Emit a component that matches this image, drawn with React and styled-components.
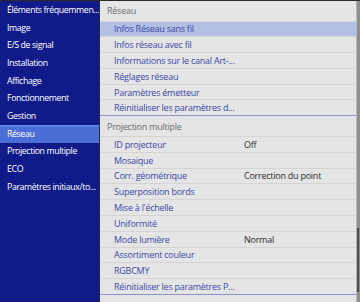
import React from 'react';
import styled, { createGlobalStyle } from 'styled-components';

const GlobalStyle = createGlobalStyle`
    html, body {
        margin: 0;
        padding: 0;
        background: #2a2a2a;
    }
    * {
        box-sizing: border-box;
    }
`;

const Screen = styled.div`
    width: 360px;
    height: 302px;
    padding-top: 1px;
    display: flex;
    font-family: "Open Sans", "Noto Sans", sans-serif;
    font-size: 9px;
    letter-spacing: -0.25px;
    overflow: hidden;
`;

const SideMenu = styled.div`
    width: 99px;
    height: 100%;
    margin-right: 1px;
    background: #101b89;
    display: flex;
    flex-direction: column;
    overflow: hidden;
`;

const SideItem = styled.div`
    height: 17.7px;
    padding-left: 7px;
    display: flex;
    align-items: center;
    color: #fff;
    font-size: 8.8px;
    letter-spacing: -0.4px;
    white-space: nowrap;
    background: ${p => (p.active ? 'linear-gradient(#6d8de6, #4a6dd6 15%, #4a6dd6)' : 'transparent')};
`;

const SubPanel = styled.div`
    flex: 1;
    height: 100%;
    background: #e5e5e5;
    display: flex;
    flex-direction: column;
`;

const SectionTitle = styled.div`
    height: ${p => p.h}px;
    padding-left: 7px;
    display: flex;
    align-items: center;
    color: #6c6c6c;
    border-bottom: 1px solid #d4d4d4;
`;

const Row = styled.div`
    height: 15.8px;
    padding-left: 14px;
    display: grid;
    grid-template-columns: 130px 1fr;
    align-items: center;
    color: #3b49a8;
    white-space: nowrap;
    background: ${p => (p.selected ? '#b4bfe4' : 'transparent')};
    border-bottom: 1px solid ${p => (p.last ? '#8a93cc' : '#d4d4d4')};
`;

const Value = styled.span`
    color: #2e2e2e;
`;

const ScrollTrack = styled.div`
    width: 4px;
    height: 100%;
    background: #8f8f8f;
    border-left: 1px solid #b8b8b8;
    display: flex;
    flex-direction: column;
    padding-top: 227px;
`;

const ScrollThumb = styled.div`
    height: 64px;
    width: 2px;
    background: #4d4d4d;
`;

const sideItems = [
    'Éléments fréquemmen...',
    'Image',
    'E/S de signal',
    'Installation',
    'Affichage',
    'Fonctionnement',
    'Gestion',
    'Réseau',
    'Projection multiple',
    'ECO',
    'Paramètres initiaux/to...',
];

const sections = [
    {
        title: 'Réseau',
        h: 20.5,
        rows: [
            { label: 'Infos Réseau sans fil', selected: true },
            { label: 'Infos réseau avec fil' },
            { label: 'Informations sur le canal Art-...' },
            { label: 'Réglages réseau' },
            { label: 'Paramètres émetteur' },
            { label: 'Réinitialiser les paramètres d...' },
        ],
    },
    {
        title: 'Projection multiple',
        h: 20.7,
        rows: [
            { label: 'ID projecteur', value: 'Off' },
            { label: 'Mosaique' },
            { label: 'Corr. géométrique', value: 'Correction du point' },
            { label: 'Superposition bords' },
            { label: "Mise à l'échelle" },
            { label: 'Uniformité' },
            { label: 'Mode lumière', value: 'Normal' },
            { label: 'Assortiment couleur' },
            { label: 'RGBCMY' },
            { label: 'Réinitialiser les paramètres P...' },
        ],
    },
];

export default function App() {
    return (
        <>
            <GlobalStyle />
            <Screen>
                <SideMenu>
                    {sideItems.map(item => (
                        <SideItem key={item} active={item === 'Réseau'}>{item}</SideItem>
                    ))}
                </SideMenu>
                <SubPanel>
                    {sections.map(sec => (
                        <React.Fragment key={sec.title}>
                            <SectionTitle h={sec.h}>{sec.title}</SectionTitle>
                            {sec.rows.map((r, i) => (
                                <Row key={r.label} selected={r.selected} last={i === sec.rows.length - 1}>
                                    <span>{r.label}</span>
                                    {r.value && <Value>{r.value}</Value>}
                                </Row>
                            ))}
                        </React.Fragment>
                    ))}
                </SubPanel>
                <ScrollTrack>
                    <ScrollThumb />
                </ScrollTrack>
            </Screen>
        </>
    );
}
